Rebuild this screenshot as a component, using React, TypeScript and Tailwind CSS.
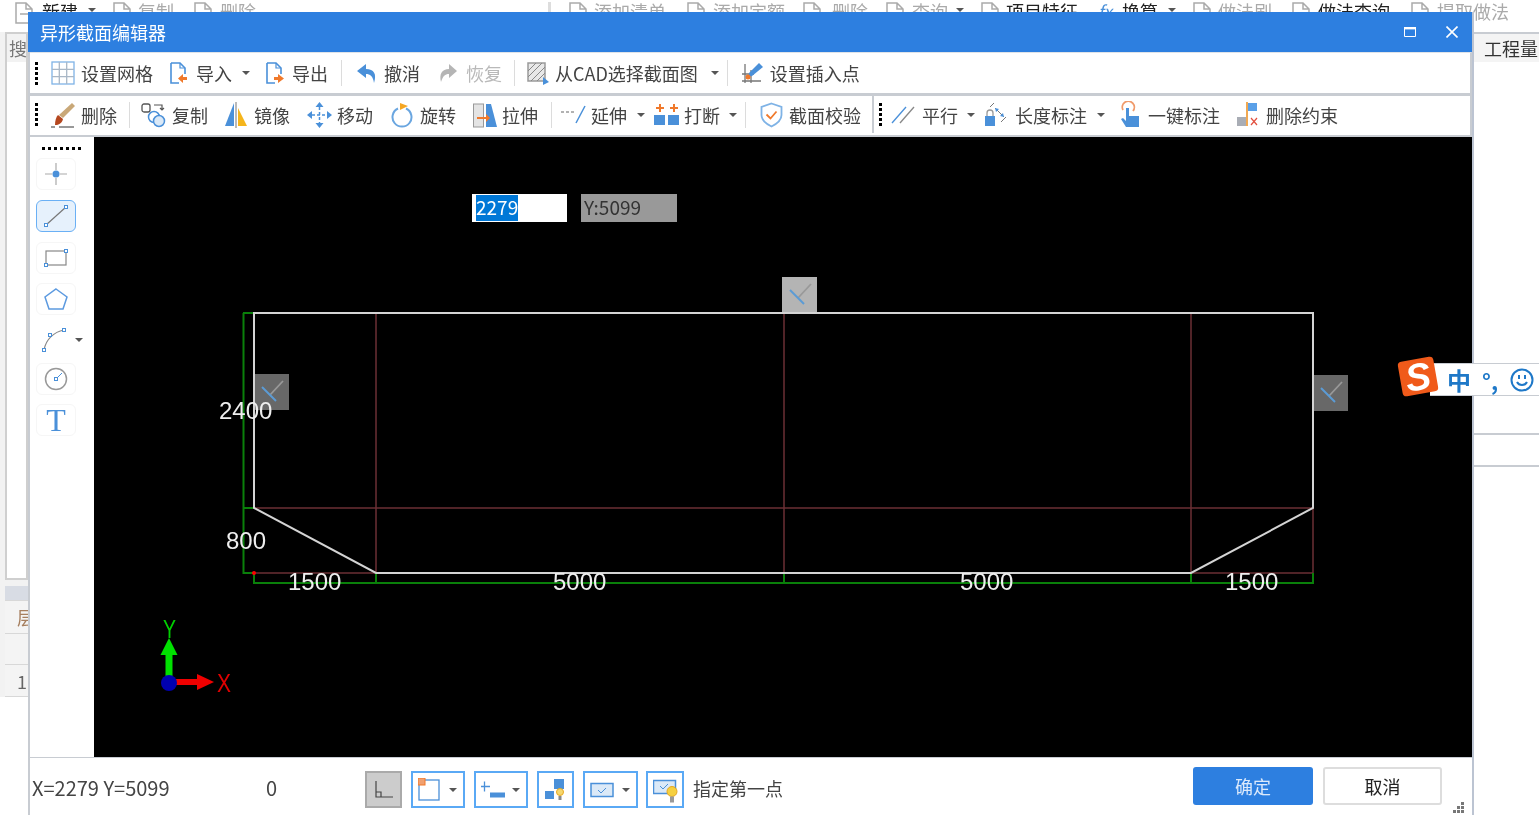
import type { ReactNode } from 'react'
import clsx from 'clsx'

const BLUE = '#4a90d9'
const ORANGE = '#f0792b'

const Doc = ({ arrow }: { arrow?: 'in' | 'out' }) => (
  <svg width="20" height="24" viewBox="0 0 20 24" fill="none">
    <path d="M2 2h9l5 5v6M2 2v20h8" stroke={BLUE} strokeWidth="1.6" />
    <path d="M11 2v5h5" stroke={BLUE} strokeWidth="1.2" />
    {arrow === 'in' && <path d="M19 15v3h-4v-3l-5 4.500 5 4.500v-3h4v-3z" fill={ORANGE} transform="translate(-1 -2)" />}
    {arrow === 'out' && <path d="M9 16h4v-3l6 4.500-6 4.500v-3H9z" fill={ORANGE} />}
  </svg>
)

const icons: Record<string, ReactNode> = {
  grid: (
    <svg width="24" height="24" viewBox="0 0 24 24" fill="none" stroke="#7fb3e6" strokeWidth="1.3">
      <rect x="1" y="1" width="22" height="22" />
      <path d="M8.300 1v22M15.700 1v22M1 8.300h22M1 15.700h22" stroke="#a9b7c6" />
    </svg>
  ),
  undo: (
    <svg width="22" height="24" viewBox="0 0 22 24">
      <path d="M10 3 1 10l9 7v-4c4 0 7 2 8 9 3-9 0-14-8-14z" fill={BLUE} />
    </svg>
  ),
  redo: (
    <svg width="20" height="24" viewBox="0 0 20 24">
      <path d="M11 3l8 7-8 7v-4c-4 0-6 2-8 8-2-8 1-13 8-13z" fill="#b5b5b5" />
    </svg>
  ),
  cad: (
    <svg width="23" height="24" viewBox="0 0 23 24" fill="none">
      <rect x="2" y="2" width="17" height="18" fill="#e8e8e8" stroke="#9a9a9a" strokeWidth="1.500" />
      <path d="M2 10l8-8M2 16l14-14M5 20l14-14M11 20l8-8" stroke="#888" />
      <path d="M17 16l6 5-6 3z" fill={BLUE} />
    </svg>
  ),
  insert: (
    <svg width="22" height="24" viewBox="0 0 22 24" fill="none">
      <path d="M4 3v19M10 9v13M1 13h12M1 20h19" stroke="#777" strokeWidth="1.300" />
      <path d="M18 2l4 4-11 9-4 1 1-4z" fill={BLUE} />
      <circle cx="7" cy="16" r="2.500" fill={ORANGE} />
    </svg>
  ),
  brush: (
    <svg width="24" height="26" viewBox="0 0 24 26" fill="none">
      <path d="M21 1l3 3-12 12-4-3z" fill="#c9a878" />
      <path d="M7 13l5 4c-1 4-4 6-8 6 0-4 1-8 3-10z" fill="#b5471f" />
      <path d="M0 25h4M8 25h15" stroke="#333" />
    </svg>
  ),
  copy: (
    <svg width="25" height="26" viewBox="0 0 25 26" fill="none" stroke="#555">
      <rect x="1" y="2" width="8" height="8" rx="2" strokeWidth="1.300" />
      <path d="M13 3h8v4M19 6l2 2 2-2" strokeWidth="1.200" />
      <circle cx="13" cy="15" r="5.500" stroke={BLUE} strokeWidth="1.500" />
      <circle cx="18" cy="19" r="5.500" stroke={BLUE} strokeWidth="1.500" fill="#dbe9f7" />
    </svg>
  ),
  mirror: (
    <svg width="24" height="26" viewBox="0 0 24 26">
      <path d="M10 1v23H1z" fill={BLUE} />
      <path d="M14 6v18h9z" fill="#f5b51c" />
      <path d="M12 0v26" stroke="#777" />
    </svg>
  ),
  move: (
    <svg width="25" height="26" viewBox="0 0 25 26" fill={BLUE}>
      <path d="M12.500 0l4 5h-8zM12.500 26l-4-5h8zM0 13l5-4v8zM25 13l-5 4V9z" />
      <path d="M12.500 5v16M5 13h15" stroke={BLUE} strokeWidth="1.500" strokeDasharray="3 2" />
    </svg>
  ),
  rotate: (
    <svg width="22" height="26" viewBox="0 0 22 26" fill="none">
      <path d="M7 6.500A9.500 9.500 0 1 0 15 6.500" stroke="#6aa6e0" strokeWidth="2" />
      <path d="M9 1l8 3-8 4z" fill="#f5a623" />
    </svg>
  ),
  stretch: (
    <svg width="24" height="26" viewBox="0 0 24 26">
      <rect x="0.500" y="2" width="10" height="23" fill="#e4e4e4" stroke="#999" />
      <path d="M13 2h5l6 23H13z" fill={BLUE} />
      <path d="M4 15h9v-3l4 4-4 4v-3H4z" fill={ORANGE} />
    </svg>
  ),
  extend: (
    <svg width="25" height="20" viewBox="0 0 25 20" fill="none">
      <path d="M0 7h14" stroke="#999" strokeWidth="1.300" strokeDasharray="3 2" />
      <path d="M24 1 15 18" stroke={BLUE} strokeWidth="1.500" />
    </svg>
  ),
  split: (
    <svg width="25" height="22" viewBox="0 0 25 22">
      <path d="M5 0h2v3h3v2H7v3H5V5H2V3h3zM19 0h2v3h3v2h-3v3h-2V5h-3V3h3z" fill={ORANGE} />
      <rect x="0" y="11" width="11" height="10" fill={BLUE} />
      <rect x="14" y="11" width="11" height="10" fill={BLUE} />
    </svg>
  ),
  shield: (
    <svg width="23" height="26" viewBox="0 0 23 26" fill="none">
      <path d="M11.500 1.500 21.500 5v8c0 6-5 9-10 11.500C6.500 22 1.500 19 1.500 13V5z" stroke="#7fb3e6" strokeWidth="1.800" />
      <path d="M6.500 12.500l4 4 6-7" stroke={ORANGE} strokeWidth="1.800" />
    </svg>
  ),
  parallel: (
    <svg width="24" height="18" viewBox="0 0 24 18" fill="none">
      <path d="M1 17 15 1" stroke={BLUE} strokeWidth="1.300" />
      <path d="M9 17 23 1" stroke="#888" strokeWidth="1.300" />
    </svg>
  ),
  length: (
    <svg width="24" height="26" viewBox="0 0 24 26" fill="none">
      <rect x="1" y="14" width="10" height="10" fill={BLUE} />
      <path d="M3 14v-3a3 3 0 0 1 6 0v3" stroke="#999" strokeWidth="1.300" />
      <path d="M10 1 6 5M11 6l9 9M17 20l5-5" stroke="#777" />
      <path d="M11 6l4 1-3 3zM20 15l-4-1 3-3z" fill={BLUE} />
    </svg>
  ),
  hand: (
    <svg width="21" height="27" viewBox="0 0 21 27" fill="none">
      <path d="M3 9a6 6 0 1 1 10 1" stroke="#f09a6a" strokeWidth="1.800" />
      <path d="M6 7h3v8h10v11H6l-5-8 2-1 3 3z" fill={BLUE} />
    </svg>
  ),
  unlink: (
    <svg width="22" height="25" viewBox="0 0 22 25" fill="none">
      <rect x="0" y="15" width="9" height="9" fill="#a9adb5" />
      <path d="M10 0v24" stroke="#f0a040" strokeWidth="1.800" />
      <rect x="11" y="1" width="9" height="8" fill="#5aa0e8" />
      <path d="M14 13l6 7M20 13l-6 7" stroke="#e2503f" strokeWidth="1.200" transform="translate(0 3)" />
    </svg>
  ),
}

const Caret = ({ className }: { className?: string }) => (
  <span className={clsx('h-0 w-0 border-x-[4px] border-t-[4px] border-x-transparent border-t-[#555]', className)} />
)

const Grip = ({ className }: { className?: string }) => (
  <div className={clsx('flex flex-col gap-[2px]', className)}>
    {[0, 1, 2, 3, 4].map((i) => (
      <span key={i} className="h-[3px] w-[3px] bg-black" />
    ))}
  </div>
)

const Sep = ({ className }: { className?: string }) => <span className={clsx('h-[26px] w-px bg-[#dcdcdc]', className)} />

function Tool({ icon, label, gap, muted, className }: { icon: string; label: string; gap: string; muted?: boolean; className: string }) {
  return (
    <div className={clsx('flex shrink-0 items-center', className)}>
      {icons[icon]}
      <span className={clsx('whitespace-nowrap', gap, muted && 'text-[#b9b9b9]')}>{label}</span>
    </div>
  )
}

function BackTool({ label, left, gap, muted, fx }: { label: string; left: string; gap: string; muted?: boolean; fx?: boolean }) {
  return (
    <div className={clsx('flex shrink-0 items-start', left, muted ? 'text-[#aaa]' : 'text-[#222]')}>
      {fx ? (
        <span className="w-[20px] text-[17px] italic text-[#4a90d9]">fx</span>
      ) : (
        <svg width="20" height="22" viewBox="0 0 20 22" fill="none" stroke="#aaa" strokeWidth="1.500">
          <path d="M2 1h10l6 6v14H2zM12 1v6h6M6 12h8" />
        </svg>
      )}
      <span className={clsx('whitespace-nowrap', gap)}>{label}</span>
    </div>
  )
}

function SideTool({ selected, children, className }: { selected?: boolean; children: ReactNode; className: string }) {
  return (
    <div
      className={clsx(
        'flex h-[32px] w-[40px] items-center justify-center rounded-[6px] border',
        selected ? 'border-[#6ab0f5] bg-[#e6f1fc]' : 'border-[#f6f6f6]',
        className,
      )}
    >
      {children}
    </div>
  )
}

const Handle = ({ x, y }: { x: number; y: number }) => (
  <rect x={x - 1.500} y={y - 1.500} width="3" height="3" fill="#fff" stroke={BLUE} />
)

function StatusBox({ children, caret, className }: { children: ReactNode; caret?: boolean; className: string }) {
  return (
    <div className={clsx('flex h-[37px] shrink-0 items-center border-2 border-[#5aa9f5] pl-[5px]', className)}>
      {children}
      {caret && <Caret className="ml-auto mr-[6px]" />}
    </div>
  )
}

function Diagram() {
  const grid = '#6b2f35'
  const green = '#0a800a'
  const check = (x: number, y: number, fill: string) => (
    <g>
      <rect x={x} y={y} width="35" height="36" fill={fill} />
      <path d={`M${x + 16} ${y + 21}L${x + 29} ${y + 7}`} stroke="#999" strokeWidth="1.800" />
      <path d={`M${x + 8} ${y + 13}L${x + 22} ${y + 27}`} stroke="#5b9bd5" strokeWidth="2" />
    </g>
  )
  return (
    <svg className="block h-full w-full" viewBox="94 137 1378 620">
      <g fill="none" stroke={grid} strokeWidth="1.500">
        <path d="M376 313V573M784 313V573M1191 313V573M1313 508V573M254 508H1313M254 573H1313" />
      </g>
      <g fill="none" stroke={green} strokeWidth="2">
        <path d="M243.500 313V574M243 313H254M243 508H254M243 573H254" />
        <path d="M254 583H1313M254 573V584M376 573V584M784 573V584M1191 573V584M1313 573V584" />
      </g>
      {check(782, 277, '#b4b4b4')}
      {check(254, 374, '#686868')}
      {check(1313, 375, '#686868')}
      <path d="M254 313H1313V508L1191 573H376L254 508Z" fill="none" stroke="#d4d4d4" strokeWidth="2" />
      <circle cx="254" cy="573" r="2" fill="#f00" />
      <g fill="#eee" fontSize="24" fontFamily="'Liberation Sans', sans-serif">
        <text x="219" y="419">2400</text>
        <text x="226" y="549">800</text>
        <text x="288" y="590">1500</text>
        <text x="553" y="590">5000</text>
        <text x="960" y="590">5000</text>
        <text x="1225" y="590">1500</text>
      </g>
      <path d="M165.500 682V655H160.500L169 638L177.500 655H172.500V682Z" fill="#00e000" />
      <path d="M169 679H197V674L214 682L197 690V685H169Z" fill="#f00000" />
      <circle cx="169" cy="683" r="8" fill="#0000b0" />
      <g fontSize="25" fontFamily="'Liberation Sans', sans-serif">
        <text x="163" y="638" fill="#00d000" textLength={13} lengthAdjust="spacingAndGlyphs">Y</text>
        <text x="217" y="692" fill="#e00000" textLength={14} lengthAdjust="spacingAndGlyphs">X</text>
      </g>
    </svg>
  )
}

export default function App() {
  return (
    <div className="relative h-[815px] w-[1539px] overflow-hidden bg-white font-['Noto_Sans_CJK_SC',sans-serif] text-[18px] leading-none text-[#444] blur-[0.4px]">
      {/* main program behind the dialog */}
      <div className="flex h-[32px] items-start pl-[14px] pt-[2px] text-[18px]">
        <BackTool label="新建" left="ml-0" gap="ml-[8px]" />
        <Caret className="ml-[10px] mt-[6px]" />
        <BackTool label="复制" left="ml-[16px]" gap="ml-[6px]" muted />
        <BackTool label="删除" left="ml-[19px]" gap="ml-[7px]" muted />
        <span className="ml-[292px] h-[14px] w-[3px] bg-[#ddd]" />
        <BackTool label="添加清单" left="ml-[17px]" gap="ml-[6px]" muted />
        <BackTool label="添加定额" left="ml-[20px]" gap="ml-[7px]" muted />
        <BackTool label="删除" left="ml-[17px]" gap="ml-[10px]" muted />
        <BackTool label="查询" left="ml-[17px]" gap="ml-[7px]" muted />
        <Caret className="ml-[8px] mt-[6px]" />
        <BackTool label="项目特征" left="ml-[16px]" gap="ml-[6px]" />
        <BackTool label="换算" left="ml-[20px]" gap="ml-[4px]" fx />
        <Caret className="ml-[10px] mt-[6px]" />
        <BackTool label="做法刷" left="ml-[16px]" gap="ml-[6px]" muted />
        <BackTool label="做法查询" left="ml-[19px]" gap="ml-[7px]" />
        <BackTool label="提取做法" left="ml-[20px]" gap="ml-[7px]" muted />
      </div>
      <div className="flex">
        <div className="w-[28px] shrink-0 bg-[#f2f2f2] pl-[5px]">
          <div className="h-[548px] border-x-2 border-y-2 border-[#cfcfcf] bg-white">
            <div className="flex h-[28px] items-center bg-[#f2f2f2] pl-[2px] text-[#777]">搜</div>
          </div>
          <div className="mt-[6px] h-[14px] bg-[#d8dce4]" />
          <div className="flex h-[34px] items-center border-y border-[#d8d8d8] bg-[#f4f4f4] pl-[12px] text-[#a67f5f]">层</div>
          <div className="h-[31px] border-b border-[#d8d8d8] bg-[#f4f4f4]" />
          <div className="flex h-[32px] items-center border-b border-[#d8d8d8] bg-[#f4f4f4] pl-[12px] text-[#666]">1</div>
        </div>
        <div className="flex-1" />
        <div className="w-[65px] shrink-0">
          <div className="flex h-[30px] items-center whitespace-nowrap border-t-2 border-[#c8ccd2] bg-[#f4f4f4] pl-[10px] text-[#333]">工程量</div>
          <div className="mt-[371px] h-[2px] bg-[#c8ccd2]" />
          <div className="mt-[30px] h-[2px] bg-[#c8ccd2]" />
        </div>
      </div>

      {/* dialog */}
      <div className="absolute left-[28px] top-[12px] flex h-[803px] w-[1446px] flex-col border-r-2 border-[#bcc4d2] bg-white">
        <div className="flex h-[40px] shrink-0 items-center bg-[#2d7fe0] pb-[1px] pl-[12px] pr-[14px] text-white">
          <span>异形截面编辑器</span>
          <svg className="ml-auto" width="12" height="10" viewBox="0 0 12 10" fill="none" stroke="#fff">
            <path d="M.5 2V9.500H11.500V2" />
            <path d="M0 1.200H12" strokeWidth="2.400" />
          </svg>
          <svg className="ml-[30px]" width="12" height="12" viewBox="0 0 12 12" stroke="#fff" strokeWidth="1.600">
            <path d="M.5 .5 11.500 11.500M11.500 .5 .5 11.500" />
          </svg>
        </div>
        <div className="flex min-h-0 flex-1 flex-col border-l-2 border-[#c8ccd2]">
          <div className="flex h-[41px] shrink-0 items-center border-r-[2px] border-t border-[#dfe3e8] border-r-[#c8ccd2]">
            <Grip className="ml-[5px]" />
            <Tool icon="grid" label="设置网格" gap="ml-[6px]" className="ml-[13px]" />
            <div className="ml-[16px] flex shrink-0 items-center">
              <Doc arrow="in" />
              <span className="ml-[7px]">导入</span>
            </div>
            <Caret className="ml-[10px]" />
            <div className="ml-[15px] flex shrink-0 items-center">
              <Doc arrow="out" />
              <span className="ml-[7px]">导出</span>
            </div>
            <Sep className="ml-[13px]" />
            <Tool icon="undo" label="撤消" gap="ml-[6px]" className="ml-[14px]" />
            <Tool icon="redo" label="恢复" gap="ml-[8px]" muted className="ml-[18px]" />
            <Sep className="ml-[12px]" />
            <Tool icon="cad" label="从CAD选择截面图" gap="ml-[6px]" className="ml-[11px]" />
            <Caret className="ml-[13px]" />
            <Sep className="ml-[8px]" />
            <Tool icon="insert" label="设置插入点" gap="ml-[7px]" className="ml-[13px]" />
          </div>
          <div className="flex h-[44px] shrink-0 items-center border-b-2 border-r-[2px] border-t-[3px] border-[#c8ccd2] pb-[2px]">
            <Grip className="ml-[5px]" />
            <Tool icon="brush" label="删除" gap="ml-[6px]" className="ml-[13px]" />
            <Sep className="ml-[12px]" />
            <Tool icon="copy" label="复制" gap="ml-[6px]" className="ml-[11px]" />
            <Tool icon="mirror" label="镜像" gap="ml-[6px]" className="ml-[16px]" />
            <Tool icon="move" label="移动" gap="ml-[5px]" className="ml-[17px]" />
            <Tool icon="rotate" label="旋转" gap="ml-[7px]" className="ml-[18px]" />
            <Tool icon="stretch" label="拉伸" gap="ml-[5px]" className="ml-[17px]" />
            <Sep className="ml-[13px]" />
            <Tool icon="extend" label="延伸" gap="ml-[5px]" className="ml-[9px]" />
            <Caret className="ml-[10px]" />
            <Tool icon="split" label="打断" gap="ml-[5px]" className="ml-[9px]" />
            <Caret className="ml-[9px]" />
            <Sep className="ml-[8px]" />
            <Tool icon="shield" label="截面校验" gap="ml-[6px]" className="ml-[14px]" />
            <span className="ml-[11px] h-full w-[2px] bg-[#c8ccd2]" />
            <Grip className="ml-[5px]" />
            <Tool icon="parallel" label="平行" gap="ml-[7px]" className="ml-[9px]" />
            <Caret className="ml-[9px]" />
            <Tool icon="length" label="长度标注" gap="ml-[7px]" className="ml-[9px]" />
            <Caret className="ml-[10px]" />
            <Tool icon="hand" label="一键标注" gap="ml-[7px]" className="ml-[15px]" />
            <Tool icon="unlink" label="删除约束" gap="ml-[7px]" className="ml-[17px]" />
          </div>
          <div className="flex min-h-0 flex-1">
            <div className="relative w-[64px] shrink-0 bg-white">
              <div className="ml-[12px] mt-[10px] flex gap-[3px]">
                {[0, 1, 2, 3, 4, 5, 6].map((i) => (
                  <span key={i} className="h-[3px] w-[3px] bg-black" />
                ))}
              </div>
              <SideTool className="ml-[6px] mt-[8px]">
                <svg width="24" height="24" viewBox="0 0 24 24" fill="none">
                  <path d="M12 1v7M12 16v7M1 12h7M16 12h7" stroke="#aaa" strokeWidth="1.200" />
                  <circle cx="12" cy="12" r="3.500" fill={BLUE} />
                </svg>
              </SideTool>
              <SideTool selected className="ml-[6px] mt-[10px]">
                <svg width="26" height="24" viewBox="0 0 26 24" fill="none">
                  <path d="M3 21 23 3" stroke="#777" strokeWidth="1.200" />
                  <Handle x={3} y={21} />
                  <Handle x={23} y={3} />
                </svg>
              </SideTool>
              <SideTool className="ml-[6px] mt-[10px]">
                <svg width="26" height="20" viewBox="0 0 26 20" fill="none">
                  <rect x="3" y="3" width="20" height="14" stroke="#888" strokeWidth="1.200" />
                  <Handle x={23} y={3} />
                  <Handle x={3} y={17} />
                </svg>
              </SideTool>
              <SideTool className="ml-[6px] mt-[9px]">
                <svg width="24" height="24" viewBox="0 0 24 24" fill="none">
                  <path d="M12 2 23 10 19 22H5L1 10Z" stroke="#5c9ae0" strokeWidth="1.500" />
                </svg>
              </SideTool>
              <div className="ml-[6px] mt-[9px] flex h-[32px] items-center">
                <svg className="ml-[5px]" width="26" height="26" viewBox="0 0 26 26" fill="none">
                  <path d="M3 23C5 12 13 5 23 3" stroke="#888" strokeWidth="1.200" />
                  <Handle x={3} y={23} />
                  <Handle x={9} y={8} />
                  <Handle x={23} y={3} />
                </svg>
                <Caret className="ml-[8px]" />
              </div>
              <SideTool className="ml-[6px] mt-[7px]">
                <svg width="24" height="24" viewBox="0 0 24 24" fill="none">
                  <circle cx="12" cy="12" r="10.500" stroke="#999" strokeWidth="1.500" />
                  <path d="M12 12 18 6" stroke={BLUE} />
                  <Handle x={12} y={12} />
                </svg>
              </SideTool>
              <SideTool className="ml-[6px] mt-[9px]">
                <span className="font-['Liberation_Serif',serif] text-[32px] leading-none text-[#4a90d9]">T</span>
              </SideTool>
            </div>
            <div className="relative min-w-0 flex-1 bg-black">
              <Diagram />
              <div className="absolute left-[378px] top-[57px] flex h-[28px] w-[95px] items-center border border-white bg-white pl-[3px] text-[19px]">
                <span className="flex h-full items-center bg-[#0078d7] pb-[4px] text-white">2279</span>
              </div>
              <div className="absolute left-[487px] top-[57px] flex h-[28px] w-[96px] items-center bg-[#999] pb-[4px] pl-[3px] text-[19px] text-[#333]">Y:5099</div>
            </div>
          </div>
          <div className="flex h-[58px] shrink-0 items-center border-t border-[#c8ccd2] pt-[6px]">
            <span className="mb-[3px] ml-[2px] w-[234px] whitespace-nowrap text-[20px]">X=2279 Y=5099</span>
            <span className="mb-[3px] w-[99px] text-[20px]">0</span>
            <div className="flex h-[37px] w-[37px] shrink-0 items-center justify-center border-2 border-[#aaa] bg-[#ccc]">
              <svg width="20" height="20" viewBox="0 0 20 20" fill="none" stroke="#444" strokeWidth="1.200">
                <path d="M2 1V17H19M2 12H7V17" />
              </svg>
            </div>
            <StatusBox caret className="ml-[9px] w-[54px]">
              <svg width="22" height="24" viewBox="0 0 22 24" fill="none">
                <rect x="1" y="2" width="20" height="20" stroke={BLUE} strokeWidth="1.300" />
                <rect x="0" y="0" width="7" height="7" fill="#f0a070" stroke={ORANGE} />
              </svg>
            </StatusBox>
            <StatusBox caret className="ml-[9px] w-[54px]">
              <svg width="25" height="22" viewBox="0 0 25 22" fill="none">
                <path d="M3.500 2.500v10M-1 7.500h10" stroke={BLUE} strokeWidth="1.300" />
                <rect x="9" y="13.500" width="15" height="5" fill={BLUE} />
              </svg>
            </StatusBox>
            <StatusBox className="ml-[9px] w-[37px]">
              <svg width="24" height="26" viewBox="0 0 24 26">
                <rect x="10" y="2" width="10" height="10" fill={BLUE} />
                <rect x="1" y="14" width="9" height="8" fill={BLUE} />
                <circle cx="16" cy="15" r="3.500" fill="#f5d76e" stroke="#e8a820" />
                <rect x="14.500" y="19" width="3" height="4" fill="#888" />
              </svg>
            </StatusBox>
            <StatusBox caret className="ml-[9px] w-[55px]">
              <svg width="24" height="16" viewBox="0 0 24 16" fill="none">
                <rect x="1" y="1.500" width="22" height="13" fill="#dbe9f7" stroke={BLUE} strokeWidth="1.500" />
                <path d="M8 8l3 3 5-5" stroke={BLUE} />
              </svg>
            </StatusBox>
            <StatusBox className="ml-[8px] w-[38px]">
              <svg width="26" height="28" viewBox="0 0 26 28" fill="none">
                <rect x="0.500" y="4.500" width="22" height="13" fill="#dbe9f7" stroke={BLUE} strokeWidth="1.500" />
                <path d="M7 10l3 3 5-5" stroke={BLUE} />
                <circle cx="19" cy="15.500" r="5" fill="#f5d040" stroke="#e8a820" />
                <rect x="17" y="20.500" width="4" height="6" fill="#999" />
              </svg>
            </StatusBox>
            <span className="mb-[3px] ml-[9px]">指定第一点</span>
            <div className="mb-[8px] ml-auto mr-[30px] flex gap-[10px]">
              <div className="flex h-[38px] w-[120px] items-center justify-center rounded-[3px] bg-[#2d7fe0] text-[#dbe9fb]">确定</div>
              <div className="flex h-[38px] w-[119px] items-center justify-center rounded-[3px] border-2 border-[#ddd] text-[#222]">取消</div>
            </div>
            <div className="absolute bottom-[2px] right-[8px] grid grid-cols-3 gap-px">
              {[0, 1, 2, 3, 4, 5, 6, 7, 8].map((i) => (
                <span key={i} className={clsx('h-[3px] w-[3px]', [0, 1, 3].includes(i) ? 'bg-transparent' : 'bg-[#777]')} />
              ))}
            </div>
          </div>
        </div>
      </div>

      {/* Sogou input method bar */}
      <div className="absolute left-[1430px] top-[363px] flex h-[33px] w-[109px] items-center border-y border-[#c8ccd2] bg-white text-[#1e78c8]">
        <span className="ml-[17px] text-[24px] font-bold">中</span>
        <span className="ml-[11px] text-[22px] font-bold">°,</span>
        <svg className="ml-[12px]" width="24" height="24" viewBox="0 0 24 24" fill="none" stroke="#1e78c8" strokeWidth="2">
          <circle cx="12" cy="12" r="10.500" />
          <path d="M7 14c2 4 8 4 10 0" />
          <path d="M9 7v4M15 7v4" />
        </svg>
      </div>
      <div className="absolute left-[1400px] top-[359px] flex h-[35px] w-[36px] rotate-[-10deg] items-center justify-center rounded-[4px] bg-[#f05a1a] font-['Liberation_Sans',sans-serif] text-[38px] font-bold italic text-white">
        S
      </div>
    </div>
  )
}
